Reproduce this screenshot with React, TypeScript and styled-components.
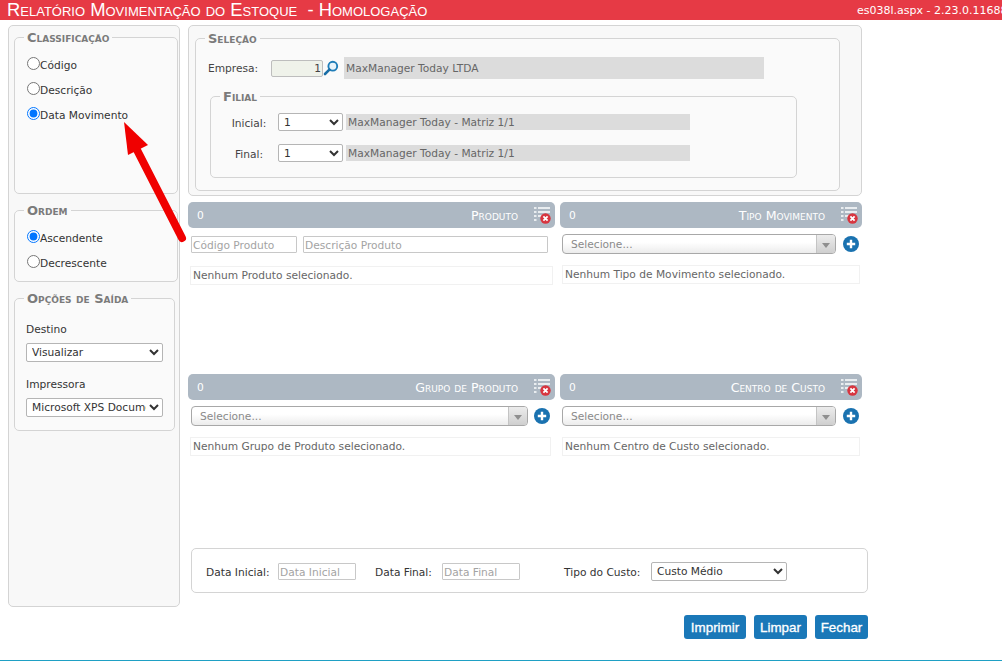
import React from 'react';
import styled, { createGlobalStyle } from 'styled-components';

const GlobalStyle = createGlobalStyle`
  html, body {
    margin: 0;
    height: 100%;
    background: #fff;
    overflow: hidden;
  }
  body {
    font-family: "DejaVu Sans", Verdana, sans-serif;
    font-size: 10.65px;
    color: #444;
  }
`;

const Page = styled.div`
  position: relative;
  display: flex;
  flex-direction: column;
  width: 1002px;
  height: 661px;
  overflow: hidden;
`;

const Header = styled.header`
  display: flex;
  align-items: center;
  flex: none;
  height: 20px;
  background: #e63a45;
  color: #fff;
  white-space: nowrap;
`;

const Title = styled.h1`
  flex: none;
  box-sizing: border-box;
  width: 857px;
  margin: 0;
  padding-left: 7px;
  font-family: "Liberation Sans", Arial, sans-serif;
  font-size: 18.4px;
  font-weight: normal;
  font-variant: small-caps;
  white-space: pre;
`;

const Version = styled.span`
  flex: none;
  font-size: 11px;
`;

const Body = styled.div`
  display: flex;
  flex: 1;
  gap: 8px;
  padding: 5px 0 0 8px;
`;

const Sidebar = styled.aside`
  box-sizing: border-box;
  flex: none;
  width: 172px;
  height: 582px;
  padding: 5px 0 0 5px;
  background: #f8f8f8;
  border: 1px solid #d4d4d4;
  border-radius: 5px;
`;

const Group = styled.fieldset<{ $width: number; $height: number; $pad: string; $top?: number; $left?: number }>`
  box-sizing: border-box;
  min-width: 0;
  width: ${(p) => p.$width}px;
  height: ${(p) => p.$height}px;
  margin: ${(p) => p.$top ?? 0}px 0 0 ${(p) => p.$left ?? 0}px;
  padding: ${(p) => p.$pad};
  background: #fafafa;
  border: 1px solid #d4d4d4;
  border-radius: 5px;
`;

const Legend = styled.legend<{ $shift: number }>`
  margin-left: ${(p) => p.$shift}px;
  padding: 0 3px;
  color: #7b7b7b;
  font-size: 13px;
  line-height: 13px;
  font-weight: bold;
  font-variant: small-caps;
`;

const RadioRow = styled.label`
  display: flex;
  align-items: flex-start;
  height: 25px;
  color: #333;
`;

const Radio = styled.input.attrs({ type: 'radio' })`
  flex: none;
  width: 13px;
  height: 13px;
  margin: 0;
`;

const RadioText = styled.span`
  padding-top: 2px;
  line-height: 13px;
`;

const FieldLabel = styled.div<{ $top?: number }>`
  margin: ${(p) => p.$top ?? 0}px 0 7px;
  line-height: 13px;
  color: #333;
`;

const NativeSelect = styled.select<{ $width: number; $height?: number }>`
  display: block;
  flex: none;
  box-sizing: border-box;
  width: ${(p) => p.$width}px;
  height: ${(p) => p.$height ?? 19}px;
  padding: 0 0 0 1px;
  background: #fff;
  border: 1px solid #b5b5b5;
  border-radius: 2px;
  color: #333;
  font-family: inherit;
  font-size: 10.65px;
`;

const Main = styled.main`
  flex: none;
  width: 680px;
`;

const SelectionPanel = styled.section`
  box-sizing: border-box;
  width: 674px;
  height: 171px;
  padding: 6px 0 0 6px;
  background: #f8f8f8;
  border: 1px solid #d4d4d4;
  border-radius: 5px;
`;

const Row = styled.div<{ $top?: number }>`
  display: flex;
  align-items: center;
  margin-top: ${(p) => p.$top ?? 0}px;
`;

const RowLabel = styled.span<{ $width: number; $before?: number; $gap?: number; $center?: boolean; $drop?: number }>`
  flex: none;
  width: ${(p) => p.$width}px;
  margin-left: ${(p) => p.$before ?? 0}px;
  margin-right: ${(p) => p.$gap ?? 0}px;
  padding-top: ${(p) => p.$drop ?? 0}px;
  text-align: ${(p) => (p.$center ? 'center' : 'left')};
  white-space: nowrap;
`;

const CodeInput = styled.input`
  flex: none;
  box-sizing: border-box;
  width: 52px;
  height: 17px;
  padding: 0 1px 0 0;
  background: #eff2ea;
  border: 1px solid #bdbdbd;
  border-radius: 2px;
  color: #444;
  font-family: inherit;
  font-size: 10.65px;
  text-align: right;
`;

const SearchIcon = styled.svg`
  flex: none;
  width: 16px;
  height: 16px;
  margin-right: 5px;
`;

const ReadOnlyBar = styled.div<{ $width: number; $height: number; $before?: number }>`
  box-sizing: border-box;
  width: ${(p) => p.$width}px;
  height: ${(p) => p.$height}px;
  margin-left: ${(p) => p.$before ?? 0}px;
  padding-left: 2px;
  background: #dcdcdc;
  color: #666;
  line-height: ${(p) => p.$height + 1}px;
  white-space: nowrap;
`;

const CardGrid = styled.div`
  display: grid;
  grid-template-columns: 367px 302px;
  grid-auto-rows: 172px;
  column-gap: 5px;
  margin-top: 6px;
`;

const CardHeader = styled.div`
  display: flex;
  align-items: center;
  box-sizing: border-box;
  height: 26px;
  padding: 1px 4px 0 9px;
  background: #adb8c3;
  border-radius: 5px;
  color: #fff;
`;

const CardTitle = styled.span`
  margin: 0 16px 0 auto;
  font-size: 12.6px;
  font-variant: small-caps;
`;

const ClearIcon = styled.svg`
  flex: none;
  width: 17px;
  height: 18px;
  margin-top: -1px;
`;

const Inputs = styled.div`
  display: flex;
  gap: 6px;
  margin: 8px 0 0 3px;
`;

const TextInput = styled.input<{ $width: number; $height?: number }>`
  flex: none;
  box-sizing: border-box;
  width: ${(p) => p.$width}px;
  height: ${(p) => p.$height ?? 17}px;
  padding: 1px 1px 0;
  background: #fff;
  border: 1px solid #c8c8c8;
  border-radius: 1px;
  color: #444;
  font-family: inherit;
  font-size: 10.65px;

  &::placeholder {
    color: #a3a3a3;
    opacity: 1;
  }
`;

const ComboRow = styled.div<{ $left: number; $gap: number }>`
  display: flex;
  align-items: center;
  gap: ${(p) => p.$gap}px;
  margin: 6px 0 0 ${(p) => p.$left}px;
`;

const Combo = styled.div<{ $width: number }>`
  display: flex;
  box-sizing: border-box;
  width: ${(p) => p.$width}px;
  height: 20px;
  background: linear-gradient(#fff 40%, #ececec);
  border: 1px solid #a8a8a8;
  border-radius: 4px;
  color: #8a8a8a;
  overflow: hidden;
`;

const ComboText = styled.span`
  flex: 1;
  padding-left: 8px;
  line-height: 20px;
`;

const ComboArrow = styled.span`
  display: flex;
  align-items: center;
  justify-content: center;
  flex: none;
  width: 18px;
  background: linear-gradient(#ececec, #cfcfcf);
  border-left: 1px solid #c4c4c4;

  &::after {
    content: '';
    margin-top: 2px;
    border-top: 5px solid #8f8f8f;
    border-left: 4px solid transparent;
    border-right: 4px solid transparent;
  }
`;

const PlusIcon = styled.svg`
  flex: none;
  width: 16px;
  height: 16px;
`;

const Message = styled.div<{ $left: number; $width: number; $top: number }>`
  box-sizing: border-box;
  width: ${(p) => p.$width}px;
  height: 19px;
  margin: ${(p) => p.$top}px 0 0 ${(p) => p.$left}px;
  padding-left: 2px;
  border: 1px solid #f1f1f1;
  color: #666;
  line-height: 17px;
  white-space: nowrap;
`;

const FilterBox = styled.section`
  display: flex;
  align-items: center;
  box-sizing: border-box;
  width: 677px;
  height: 45px;
  margin: 2px 0 0 3px;
  padding: 2px 0 0 14px;
  border: 1px solid #d4d4d4;
  border-radius: 5px;
  color: #333;
`;

const Actions = styled.div`
  display: flex;
  justify-content: flex-end;
  gap: 8px;
  margin-top: 22px;
`;

const Button = styled.button<{ $width: number }>`
  box-sizing: border-box;
  width: ${(p) => p.$width}px;
  height: 24px;
  padding: 0;
  background: #1a78b8;
  border: 0;
  border-radius: 3px;
  color: #fff;
  font-family: "Liberation Sans", Arial, sans-serif;
  font-size: 13.4px;
  -webkit-text-stroke: 0.3px #fff;
`;

const Footer = styled.div`
  flex: none;
  height: 1px;
  background: #1fa0c4;
`;

const Arrow = styled.svg`
  position: absolute;
  left: 110px;
  top: 110px;
  width: 90px;
  height: 140px;
  pointer-events: none;
`;

function Magnifier() {
  return (
    <SearchIcon viewBox="0 0 16 16">
      <circle cx="9.8" cy="6.2" r="4.4" fill="#e8f4fb" stroke="#1f7db8" strokeWidth="1.9" />
      <path d="M6.4 9.6 2 14" stroke="#1a6ea6" strokeWidth="2.6" strokeLinecap="round" />
    </SearchIcon>
  );
}

function ClearList() {
  return (
    <ClearIcon viewBox="0 0 17 18">
      <g fill="#e9edf0">
        <rect x="0" y="1" width="2.5" height="2" />
        <rect x="4" y="1" width="12" height="2" />
        <rect x="0" y="5" width="2.5" height="2" />
        <rect x="4" y="5" width="12" height="2" />
        <rect x="0" y="9" width="2.5" height="2" />
        <rect x="4" y="9" width="6" height="2" />
        <rect x="0" y="13" width="2.5" height="2" />
      </g>
      <circle cx="11.5" cy="12.5" r="5.2" fill="#d8353f" />
      <path d="M9.4 10.4 13.6 14.6M13.6 10.4 9.4 14.6" stroke="#fff" strokeWidth="1.8" />
    </ClearIcon>
  );
}

function Plus() {
  return (
    <PlusIcon viewBox="0 0 16 16">
      <circle cx="8" cy="8" r="8" fill="#1a72b0" />
      <path d="M8 3.8v8.4M3.8 8h8.4" stroke="#fff" strokeWidth="2.4" />
    </PlusIcon>
  );
}

function CardHead({ title }: { title: string }) {
  return (
    <CardHeader>
      <span>0</span>
      <CardTitle>{title}</CardTitle>
      <ClearList />
    </CardHeader>
  );
}

function ComboBox({ left, gap, width }: { left: number; gap: number; width: number }) {
  return (
    <ComboRow $left={left} $gap={gap}>
      <Combo $width={width}>
        <ComboText>Selecione...</ComboText>
        <ComboArrow />
      </Combo>
      <Plus />
    </ComboRow>
  );
}

export default function App() {
  return (
    <Page>
      <GlobalStyle />
      <Header>
        <Title>{'Relatório Movimentação do Estoque  - Homologação'}</Title>
        <Version>es038l.aspx - 2.23.0.11688</Version>
      </Header>

      <Body>
        <Sidebar>
          <Group $width={164} $height={163} $pad="13px 0 0 12px">
            <Legend $shift={-3}>Classificação</Legend>
            <RadioRow><Radio name="classificacao" /><RadioText>Código</RadioText></RadioRow>
            <RadioRow><Radio name="classificacao" /><RadioText>Descrição</RadioText></RadioRow>
            <RadioRow><Radio name="classificacao" defaultChecked /><RadioText>Data Movimento</RadioText></RadioRow>
          </Group>
          <Group $width={164} $height={78} $pad="13px 0 0 12px" $top={10}>
            <Legend $shift={-3}>Ordem</Legend>
            <RadioRow><Radio name="ordem" defaultChecked /><RadioText>Ascendente</RadioText></RadioRow>
            <RadioRow><Radio name="ordem" /><RadioText>Decrescente</RadioText></RadioRow>
          </Group>
          <Group $width={161} $height={139} $pad="18px 0 0 11px" $top={10}>
            <Legend $shift={-2}>Opções de Saída</Legend>
            <FieldLabel>Destino</FieldLabel>
            <NativeSelect $width={137} defaultValue="Visualizar">
              <option>Visualizar</option>
              <option>Impressora</option>
            </NativeSelect>
            <FieldLabel $top={16}>Impressora</FieldLabel>
            <NativeSelect $width={137} defaultValue="Microsoft XPS Document Writer">
              <option>Microsoft XPS Document Writer</option>
            </NativeSelect>
          </Group>
        </Sidebar>

        <Main>
          <SelectionPanel>
            <Group $width={645} $height={159} $pad="12px 0 0 12px">
              <Legend $shift={-3}>Seleção</Legend>
              <Row>
                <RowLabel $width={63}>Empresa:</RowLabel>
                <CodeInput defaultValue="1" />
                <Magnifier />
                <ReadOnlyBar $width={420} $height={22}>MaxManager Today LTDA</ReadOnlyBar>
              </Row>
              <Group $width={587} $height={88} $pad="10px 0 0 19px" $top={11} $left={2}>
                <Legend $shift={-10}>Filial</Legend>
                <Row>
                  <RowLabel $width={38} $gap={10} $center $drop={3}>Inicial:</RowLabel>
                  <NativeSelect $width={65} $height={18}><option>1</option></NativeSelect>
                  <ReadOnlyBar $width={344} $height={16} $before={3}>MaxManager Today - Matriz 1/1</ReadOnlyBar>
                </Row>
                <Row $top={13}>
                  <RowLabel $width={38} $gap={10} $center $drop={3}>Final:</RowLabel>
                  <NativeSelect $width={65} $height={18}><option>1</option></NativeSelect>
                  <ReadOnlyBar $width={344} $height={16} $before={3}>MaxManager Today - Matriz 1/1</ReadOnlyBar>
                </Row>
              </Group>
            </Group>
          </SelectionPanel>

          <CardGrid>
            <div>
              <CardHead title="Produto" />
              <Inputs>
                <TextInput $width={106} placeholder="Código Produto" />
                <TextInput $width={245} placeholder="Descrição Produto" />
              </Inputs>
              <Message $left={2} $width={363} $top={13}>Nenhum Produto selecionado.</Message>
            </div>
            <div>
              <CardHead title="Tipo Movimento" />
              <ComboBox left={2} gap={7} width={274} />
              <Message $left={2} $width={298} $top={11}>Nenhum Tipo de Movimento selecionado.</Message>
            </div>
            <div>
              <CardHead title="Grupo de Produto" />
              <ComboBox left={3} gap={6} width={337} />
              <Message $left={2} $width={361} $top={11}>Nenhum Grupo de Produto selecionado.</Message>
            </div>
            <div>
              <CardHead title="Centro de Custo" />
              <ComboBox left={2} gap={7} width={274} />
              <Message $left={2} $width={298} $top={11}>Nenhum Centro de Custo selecionado.</Message>
            </div>
          </CardGrid>

          <FilterBox>
            <RowLabel $width={72} $drop={2}>Data Inicial:</RowLabel>
            <TextInput $width={78} placeholder="Data Inicial" />
            <RowLabel $width={67} $before={19} $drop={2}>Data Final:</RowLabel>
            <TextInput $width={78} placeholder="Data Final" />
            <RowLabel $width={87} $before={44} $drop={2}>Tipo do Custo:</RowLabel>
            <NativeSelect $width={136} defaultValue="Custo Médio">
              <option>Custo Médio</option>
            </NativeSelect>
          </FilterBox>

          <Actions>
            <Button $width={62}>Imprimir</Button>
            <Button $width={53}>Limpar</Button>
            <Button $width={53}>Fechar</Button>
          </Actions>
        </Main>
      </Body>

      <Footer />

      <Arrow viewBox="110 110 90 140">
        <path d="M124 122 148 145 128 155Z" fill="#f00000" />
        <path d="M136 148 182 238" stroke="#f00000" strokeWidth="8" strokeLinecap="round" />
      </Arrow>
    </Page>
  );
}
